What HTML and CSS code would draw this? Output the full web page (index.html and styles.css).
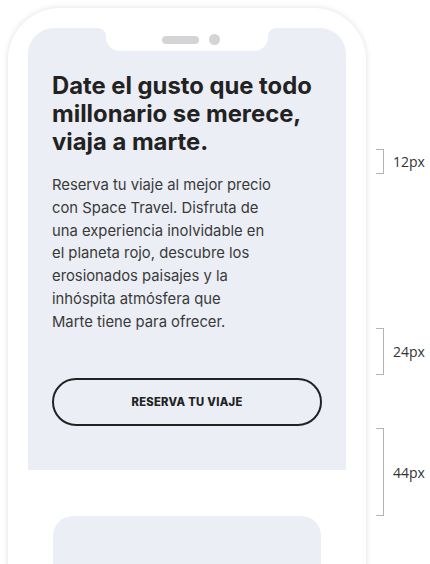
FILE: index.html
```html
<!DOCTYPE html>
<html lang="es">
<head>
<meta charset="utf-8">
<title>Space Travel</title>
<link rel="stylesheet" href="styles.css">
</head>
<body>
<div class="stage">
  <div class="phone">
    <section class="hero">
      <div class="notch">
        <span class="speaker"></span>
        <span class="camera"></span>
      </div>
      <h1 class="title">Date el gusto que todo<br>millonario se merece,<br>viaja a marte.</h1>
      <p class="text">Reserva tu viaje al mejor precio<br>con Space Travel. Disfruta de<br>una experiencia inolvidable en<br>el planeta rojo, descubre los<br>erosionados paisajes y la<br>inhóspita atmósfera que<br>Marte tiene para ofrecer.</p>
      <button class="cta">RESERVA TU VIAJE</button>
    </section>
    <div class="card"></div>
  </div>

  <div class="measure m12"><span class="bracket"></span><span class="label">12px</span></div>
  <div class="measure m24"><span class="bracket"></span><span class="label">24px</span></div>
  <div class="measure m44"><span class="bracket"></span><span class="label">44px</span></div>
</div>
</body>
</html>
```

FILE: styles.css
```css
* { box-sizing: border-box; }
html, body { margin: 0; padding: 0; background: #ffffff; }
body { font-family: "Inter", "Noto Sans", sans-serif; }

.stage {
  position: relative;
  width: 430px;
  height: 564px;
  overflow: hidden;
  padding: 8px 0 0 8px;
}

.phone {
  width: 358px;
  height: 720px;
  background: #ffffff;
  border-radius: 52px;
  box-shadow: 0 0 6px rgba(0, 0, 0, 0.13);
  padding: 20px;
  display: flex;
  flex-direction: column;
  gap: 46px;
}

.hero {
  position: relative;
  background: #ebeef5;
  border-radius: 26px 26px 0 0;
  padding: 44px 24px 44px 24px;
  display: flex;
  flex-direction: column;
}

.notch {
  position: absolute;
  top: 0;
  left: 78px;
  width: 162px;
  height: 23px;
  background: #ffffff;
  border-radius: 0 0 14px 14px;
  display: flex;
  justify-content: center;
  align-items: center;
  gap: 10px;
  padding-left: 8px;
}
.notch::before,
.notch::after {
  content: "";
  position: absolute;
  top: 0;
  width: 8px;
  height: 8px;
}
.notch::before {
  left: -8px;
  background: radial-gradient(circle at 0 100%, transparent 7.5px, #ffffff 8px);
}
.notch::after {
  right: -8px;
  background: radial-gradient(circle at 100% 100%, transparent 7.5px, #ffffff 8px);
}
.speaker {
  width: 37px;
  height: 8px;
  border-radius: 4px;
  background: #d4d4d6;
}
.camera {
  width: 11px;
  height: 11px;
  border-radius: 50%;
  background: #d4d4d6;
}

.title {
  margin: 0;
  font-size: 23.8px;
  line-height: 28px;
  font-weight: 700;
  color: #222222;
  letter-spacing: 0;
}

.text {
  margin: 18px 0 0 0;
  font-size: 14.8px;
  line-height: 22.8px;
  color: #3a3a3a;
}

.cta {
  margin-top: 44px;
  height: 48px;
  width: 100%;
  border: 2px solid #222222;
  border-radius: 24px;
  background: transparent;
  font-family: "Inter", sans-serif;
  font-weight: 800;
  font-size: 11.2px;
  letter-spacing: 0.3px;
  color: #222222;
}

.card {
  margin: 0 25px;
  height: 120px;
  background: #ebeef5;
  border-radius: 20px 20px 0 0;
}

.measure {
  position: absolute;
  left: 376px;
  display: flex;
  align-items: center;
  gap: 9px;
}
.bracket {
  width: 8px;
  align-self: stretch;
  border: 1.5px solid #b4b4b4;
  border-left: none;
}
.label {
  font-family: "Open Sans", "DejaVu Sans", sans-serif;
  font-size: 14px;
  color: #333333;
}
.m12 { top: 149px; height: 25px; }
.m24 { top: 328px; height: 47px; }
.m44 { top: 428px; height: 88px; }
```
